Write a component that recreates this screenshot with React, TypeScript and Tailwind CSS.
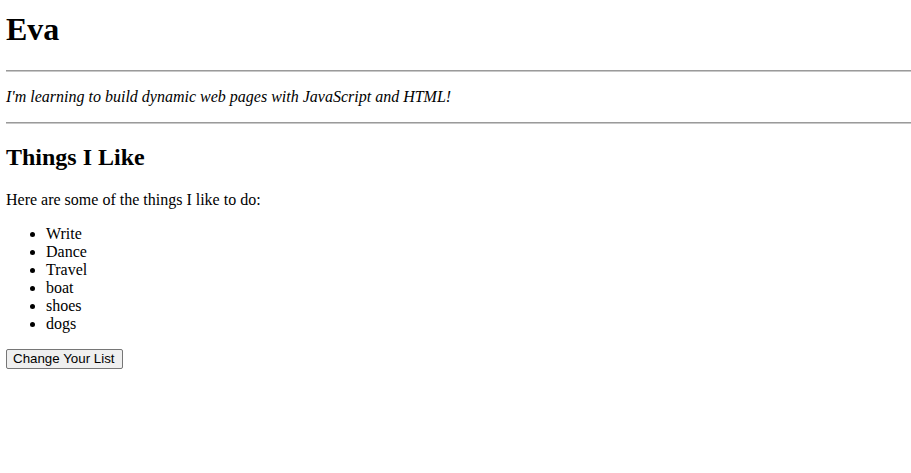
export default function App() {
  const items = ["Write", "Dance", "Travel", "boat", "shoes", "dogs"];
  return (
    <div className="min-h-[473px] bg-white pt-[11px] pl-[6px] text-black" style={{ fontFamily: '"Liberation Serif", "Times New Roman", serif' }}>
      <h1 className="text-[32px] leading-[36px] font-bold">Eva</h1>
      <div className="mt-[23px] h-0 border-t border-b border-t-[#9a9a9a] border-b-[#c8c8c8]" />
      <p className="mt-[16px] text-[16px] leading-[18px] italic">I'm learning to build dynamic web pages with JavaScript and HTML!</p>
      <div className="mt-[16px] h-0 border-t border-b border-t-[#9a9a9a] border-b-[#c8c8c8]" />
      <h2 className="mt-[19px] text-[24px] leading-[28px] font-bold">Things I Like</h2>
      <p className="mt-[20px] text-[16px] leading-[18px]">Here are some of the things I like to do:</p>
      <ul className="mt-[16px] list-disc pl-10 text-[16px] leading-[18px]">
        {items.map((it) => (
          <li key={it}>{it}</li>
        ))}
      </ul>
      <div className="mt-[13px]">
        <button
          className="h-[20px] pl-[6px] pr-[7px] border border-[#767676] bg-[#efefef] rounded-[2px] text-[13.333px] leading-[16px] text-black"
          style={{ fontFamily: '"Liberation Sans", Arial, sans-serif' }}
        >
          Change Your List
        </button>
      </div>
    </div>
  );
}
